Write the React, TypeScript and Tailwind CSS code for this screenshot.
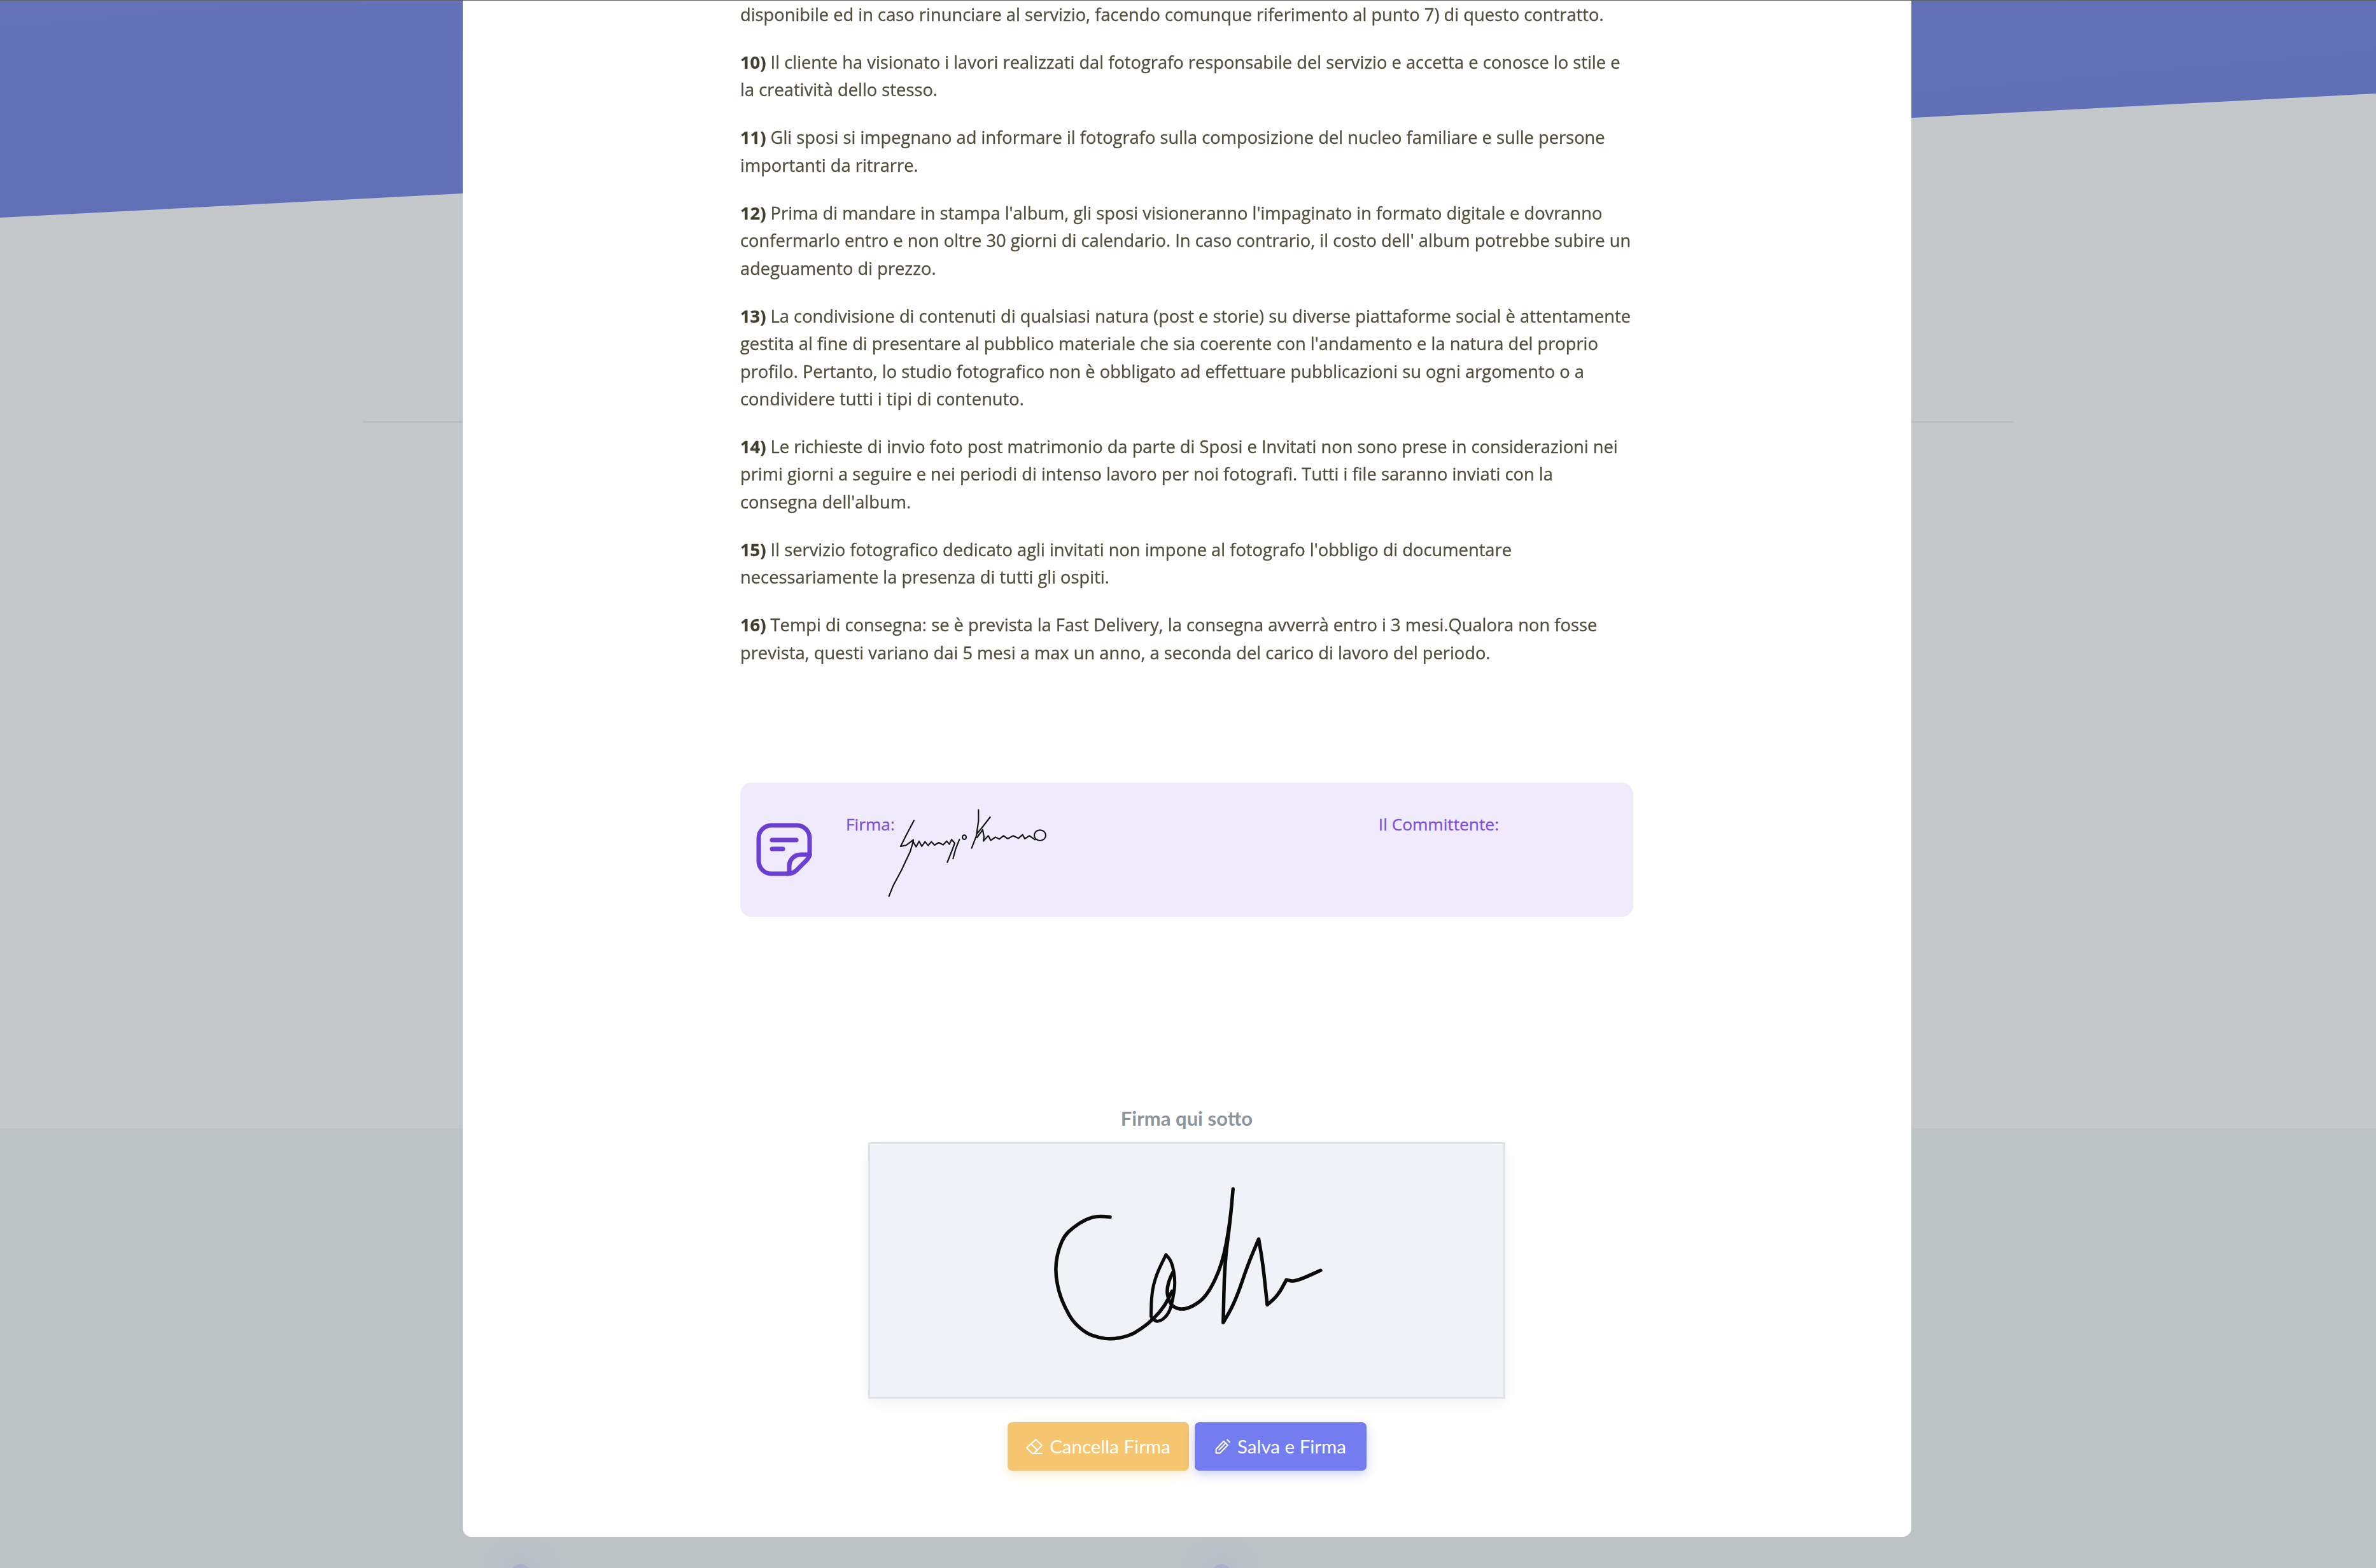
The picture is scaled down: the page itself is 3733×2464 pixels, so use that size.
import React from "react";

type Pt = [number, number];

// midpoint smoothing so the hand drawn strokes don't look polygonal
function smooth(pts: Pt[]) {
  let d = `M${pts[0][0]} ${pts[0][1]}`;
  for (let i = 1; i < pts.length - 1; i++) {
    const mx = (pts[i][0] + pts[i + 1][0]) / 2;
    const my = (pts[i][1] + pts[i + 1][1]) / 2;
    d += ` Q${pts[i][0]} ${pts[i][1]} ${mx} ${my}`;
  }
  const last = pts[pts.length - 1];
  return d + ` L${last[0]} ${last[1]}`;
}

function jagged(pts: Pt[]) {
  return "M" + pts.map((p) => `${p[0]} ${p[1]}`).join(" L");
}

const canvasStrokes: { pts: Pt[]; w: number }[] = [
  {
    w: 5.5,
    pts: [
      [597, 575], [570, 568], [540, 585], [510, 625], [490, 665], [478, 720], [470, 790], [470, 860], [478, 940],
      [492, 1010], [510, 1075], [540, 1130], [570, 1152], [600, 1160], [640, 1145], [670, 1110], [700, 1060],
      [725, 1000], [742, 930],
    ],
  },
  {
    w: 5,
    pts: [
      [693, 1050], [693, 950], [705, 850], [728, 755], [728, 755], [742, 790], [750, 880], [745, 960], [735, 1040],
      [710, 1080], [695, 1060],
    ],
  },
  {
    w: 5.5,
    pts: [
      [745, 835], [728, 900], [735, 990], [760, 1020], [790, 1005], [825, 950], [860, 800], [878, 600], [885, 440],
      [885, 440], [878, 600], [865, 800], [862, 1080], [862, 1080], [890, 980], [920, 800], [945, 680], [945, 680],
      [955, 800], [965, 995], [965, 995], [990, 950], [1010, 875], [1010, 875], [1030, 885], [1090, 830],
    ],
  },
];

const miniStrokes: Pt[][] = [
  [[168, 88], [130, 160], [105, 210], [130, 205], [165, 180]],
  [[165, 185], [150, 235], [110, 320], [70, 395], [50, 445]],
  [
    [160, 182], [178, 212], [192, 186], [205, 210], [220, 188], [235, 206], [250, 188], [265, 204], [285, 192],
    [305, 203], [322, 185], [335, 200], [345, 178], [360, 195], [345, 235], [325, 285],
  ],
  [[382, 178], [365, 220], [352, 268]],
  [[472, 38], [472, 90], [462, 160], [440, 218]],
  [[527, 72], [490, 120], [465, 150]],
  [
    [465, 168], [492, 132], [498, 165], [495, 185], [518, 160], [530, 182], [552, 166], [570, 176], [590, 160],
    [610, 174], [635, 160], [660, 172], [680, 155], [690, 174], [712, 160], [738, 178],
  ],
];

const paragraphs: { n?: string; t: string }[] = [
  { t: "disponibile ed in caso rinunciare al servizio, facendo comunque riferimento al punto 7) di questo contratto." },
  { n: "10)", t: "Il cliente ha visionato i lavori realizzati dal fotografo responsabile del servizio e accetta e conosce lo stile e la creatività dello stesso." },
  { n: "11)", t: "Gli sposi si impegnano ad informare il fotografo sulla composizione del nucleo familiare e sulle persone importanti da ritrarre." },
  { n: "12)", t: "Prima di mandare in stampa l'album, gli sposi visioneranno l'impaginato in formato digitale e dovranno confermarlo entro e non oltre 30 giorni di calendario. In caso contrario, il costo dell' album potrebbe subire un adeguamento di prezzo." },
  { n: "13)", t: "La condivisione di contenuti di qualsiasi natura (post e storie) su diverse piattaforme social è attentamente gestita al fine di presentare al pubblico materiale che sia coerente con l'andamento e la natura del proprio profilo. Pertanto, lo studio fotografico non è obbligato ad effettuare pubblicazioni su ogni argomento o a condividere tutti i tipi di contenuto." },
  { n: "14)", t: "Le richieste di invio foto post matrimonio da parte di Sposi e Invitati non sono prese in considerazioni nei primi giorni a seguire e nei periodi di intenso lavoro per noi fotografi. Tutti i file saranno inviati con la consegna dell'album." },
  { n: "15)", t: "Il servizio fotografico dedicato agli invitati non impone al fotografo l'obbligo di documentare necessariamente la presenza di tutti gli ospiti." },
  { n: "16)", t: "Tempi di consegna: se è prevista la Fast Delivery, la consegna avverrà entro i 3 mesi.Qualora non fosse prevista, questi variano dai 5 mesi a max un anno, a seconda del carico di lavoro del periodo." },
];

function NoteIcon() {
  return (
    <svg className="w-[110px] h-[100px] shrink-0" viewBox="0 0 110 100" fill="none" stroke="#6b3fd0" strokeWidth="7" strokeLinecap="round" strokeLinejoin="round">
      <path d="M58 88H32a20 20 0 0 1-20-20V32a20 20 0 0 1 20-20h40a20 20 0 0 1 20 20v26" />
      <path d="M92 58H78a18 18 0 0 0-18 18v10" />
      <path d="M92 58q0 4-6 10L72 82q-6 6-14 6" />
      <path d="M33 35h38M33 49h17" />
    </svg>
  );
}

function EraserIcon() {
  return (
    <svg className="w-[28px] h-[26px]" viewBox="15 9 27 25" fill="none" stroke="white" strokeWidth="2" strokeLinejoin="round" strokeLinecap="round">
      <path d="M31 11l9 9-12 12h-3l-8-8.500z" />
      <path d="M23.500 17.500l9.500 9.500M28 32h12" />
    </svg>
  );
}

function PencilIcon() {
  return (
    <svg className="w-[26px] h-[26px]" viewBox="14 10 25 24" fill="none" stroke="white" strokeWidth="2" strokeLinejoin="round" strokeLinecap="round">
      <path d="M16.500 32v-6L28 14l6 6-11.500 12z" />
      <path d="M21 27l10-10M33.500 12l3.500 3.500" />
    </svg>
  );
}

export default function App() {
  return (
    <div className="relative w-[3733px] h-[2464px] overflow-hidden bg-[#c4c8cb]">
      {/* page behind the modal */}
      <div className="h-[342px] bg-gradient-to-br from-[#6373b7] to-[#5e6eb5] [clip-path:polygon(0_0,100%_0,100%_147px,0_342px)]" />
      <div className="mt-[320px] mx-[569px] h-[2px] bg-[#b6babe]" />
      <div className="relative mt-[1109px] h-[691px] bg-[#bdc2c5]">
        <div className="absolute left-[803px] top-[685px] w-[30px] h-[30px] rounded-full bg-[#aab0cc] shadow-[0_0_40px_24px_rgba(170,176,204,0.2)]" />
        <div className="absolute left-[1904px] top-[685px] w-[30px] h-[30px] rounded-full bg-[#aab0cc] shadow-[0_0_40px_24px_rgba(170,176,204,0.2)]" />
      </div>
      <div className="absolute left-[569px] top-0 w-[158px] h-[5px] bg-[#6f6fbf]" />

      {/* modal */}
      <div className="absolute left-[727px] top-0 w-[2276px] h-[2415px] bg-white rounded-b-[14px] pl-[436px] pr-[437px] pt-[1px] flex flex-col">
        <div className="flex flex-col gap-[31.400px] font-['Open_Sans',sans-serif] text-[27.300px] leading-[43.500px] text-[#504d3c] [-webkit-text-stroke:0.3px_#504d3c] h-[1229px] blur-[0.5px]">
          {paragraphs.map((p, i) => (
            <p key={i}>
              {p.n && <b className="font-bold text-[#403d2e]">{p.n} </b>}
              {p.t}
            </p>
          ))}
        </div>

        <div className="flex h-[211px] rounded-[18px] bg-[#efebfc] pl-[17px] font-['Open_Sans',sans-serif] text-[26.300px] text-[#7d4fe0] [-webkit-text-stroke:0.3px_#7d4fe0]">
          <div className="pt-[55px]">
            <NoteIcon />
          </div>
          <div className="ml-[39px] pt-[46px] leading-[38px]">Firma:</div>
          <svg className="ml-[-26px] mt-[30px] w-[280px] h-[160px] shrink-0" viewBox="0 0 840 480" fill="none" stroke="#151515" strokeWidth="6.500" strokeLinecap="round" strokeLinejoin="round">
            {miniStrokes.map((s, i) => (
              <path key={i} d={jagged(s)} />
            ))}
            <ellipse cx="405" cy="167" rx="9" ry="10" />
            <ellipse cx="762" cy="158" rx="27" ry="25" />
          </svg>
          <div className="ml-[506px] pt-[46px] leading-[38px]">Il Committente:</div>
        </div>

        <div className="mt-[296px] text-center font-['Lato',sans-serif] font-bold text-[31px] leading-[40px] text-[#89949c]">Firma qui sotto</div>
        <div className="mt-[18px] mx-[201px] h-[403px] border-[3px] border-[#dfe3e8] bg-[#eff2f7] shadow-[0_8px_20px_rgba(0,0,0,0.05)]">
          <svg className="w-full h-full" viewBox="35 226 1483 1209" preserveAspectRatio="none" fill="none" stroke="#0a0a0a" strokeLinecap="round" strokeLinejoin="round">
            {canvasStrokes.map((s, i) => (
              <path key={i} d={smooth(s.pts)} strokeWidth={s.w} vectorEffect="non-scaling-stroke" />
            ))}
          </svg>
        </div>

        <div className="mt-[37px] flex justify-center gap-[9px] font-['Lato',sans-serif] text-[29.500px] text-white">
          <button className="flex items-center justify-center gap-[10px] w-[285px] h-[76px] rounded-[7px] bg-[#f6c56f] shadow-[0_6px_16px_rgba(246,197,111,0.35)]">
            <EraserIcon />
            Cancella Firma
          </button>
          <button className="flex items-center justify-center gap-[10px] w-[270px] h-[76px] rounded-[7px] bg-[#737df0] shadow-[0_6px_16px_rgba(115,125,240,0.35)]">
            <PencilIcon />
            Salva e Firma
          </button>
        </div>
      </div>

      <div className="absolute inset-x-0 top-0 h-px bg-[#5a5f66]" />
    </div>
  );
}
